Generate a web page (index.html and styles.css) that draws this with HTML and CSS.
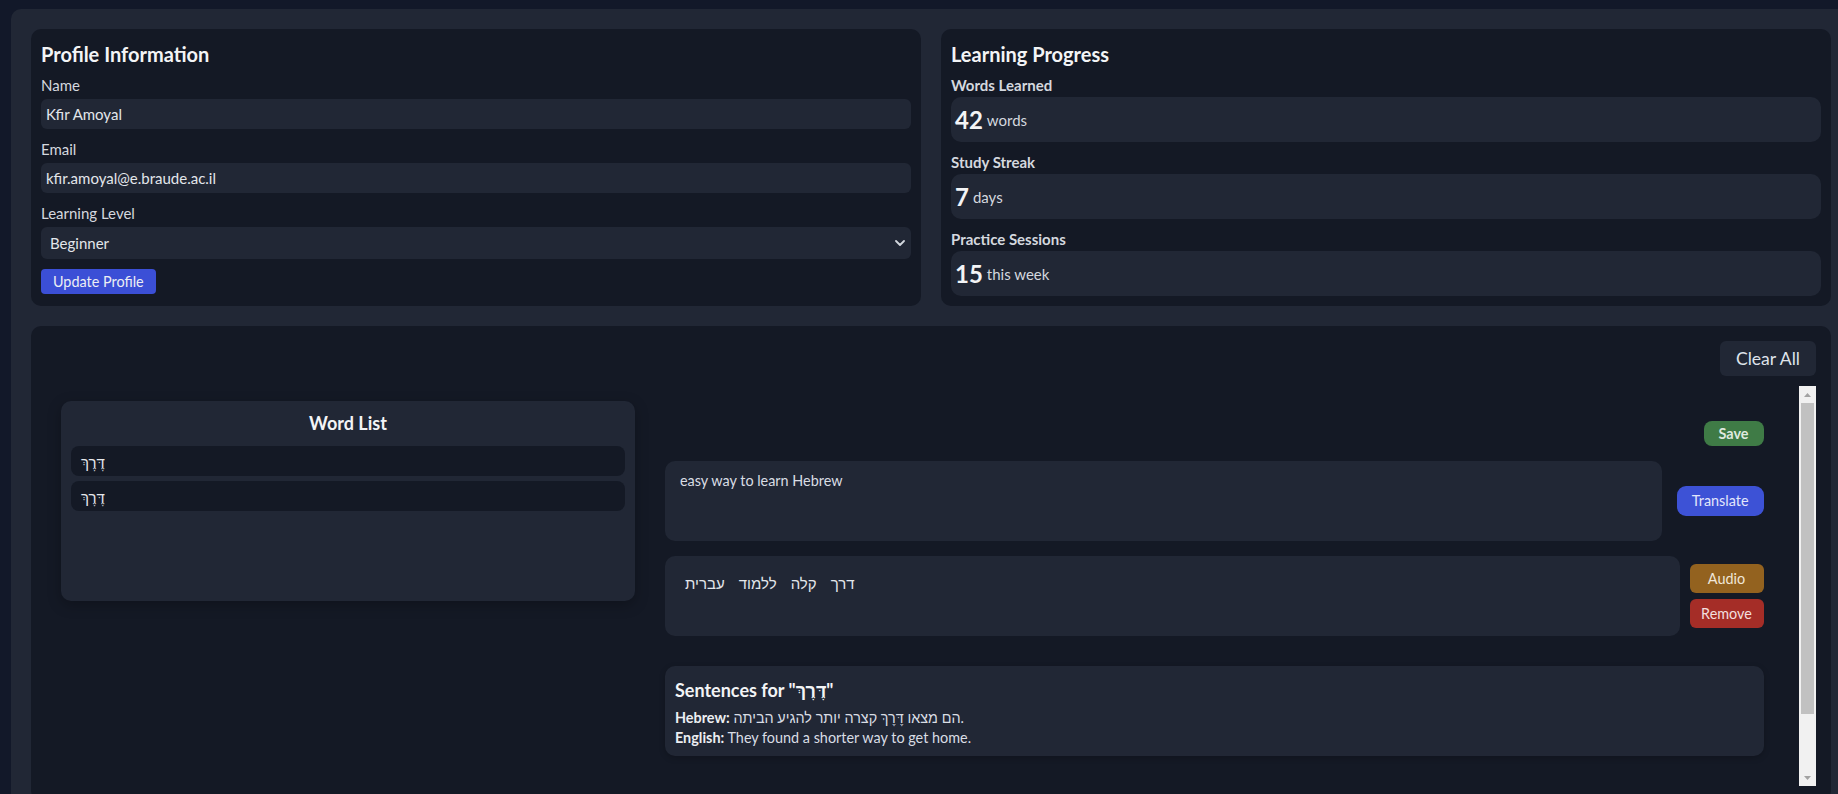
FILE: index.html
```html
<!DOCTYPE html>
<html lang="en">
<head>
<meta charset="utf-8">
<title>Hebrew Learning – Profile</title>
<link rel="stylesheet" href="styles.css">
</head>
<body>
<div class="app">
  <div class="top-grid">
    <section class="card">
      <h2 class="card-title">Profile Information</h2>
      <div class="field">
        <label class="field-label" for="name">Name</label>
        <input class="text-input" id="name" type="text" value="Kfir Amoyal">
      </div>
      <div class="field">
        <label class="field-label" for="email">Email</label>
        <input class="text-input" id="email" type="email" value="kfir.amoyal@e.braude.ac.il">
      </div>
      <div class="field field-last">
        <label class="field-label" for="level">Learning Level</label>
        <div class="select-wrap">
          <select class="select-input" id="level">
            <option>Beginner</option>
            <option>Intermediate</option>
            <option>Advanced</option>
          </select>
          <svg class="select-chevron" width="10" height="6" viewBox="0 0 10 6" aria-hidden="true"><path d="M1 1l4 4 4-4" fill="none" stroke="#d3d7de" stroke-width="1.8" stroke-linecap="round" stroke-linejoin="round"/></svg>
        </div>
      </div>
      <button class="btn btn-primary" type="button">Update Profile</button>
    </section>

    <section class="card">
      <h2 class="card-title">Learning Progress</h2>
      <div class="stat">
        <div class="stat-label">Words Learned</div>
        <div class="stat-box"><span class="stat-value">42</span><span class="stat-unit">words</span></div>
      </div>
      <div class="stat">
        <div class="stat-label">Study Streak</div>
        <div class="stat-box"><span class="stat-value">7</span><span class="stat-unit">days</span></div>
      </div>
      <div class="stat stat-last">
        <div class="stat-label">Practice Sessions</div>
        <div class="stat-box"><span class="stat-value">15</span><span class="stat-unit">this week</span></div>
      </div>
    </section>
  </div>

  <section class="card workspace">
    <div class="workspace-header">
      <button class="btn-clear" type="button">Clear All</button>
    </div>
    <div class="workspace-scroll">
      <div class="scroll-content">
        <div class="workspace-row">
          <aside class="word-list">
            <h3 class="word-list-title">Word List</h3>
            <ul class="word-items">
              <li class="word-item">דֶּרֶךְ</li>
              <li class="word-item">דֶּרֶךְ</li>
            </ul>
          </aside>

          <div class="editor">
            <div class="save-row">
              <button class="btn btn-save" type="button">Save</button>
            </div>
            <div class="editor-row">
              <textarea class="source-text">easy way to learn Hebrew</textarea>
              <button class="btn btn-translate" type="button">Translate</button>
            </div>
            <div class="editor-row translation-row">
              <div class="translation">
                <div class="words" dir="rtl">
                  <span class="word">דרך</span>
                  <span class="word">קלה</span>
                  <span class="word">ללמוד</span>
                  <span class="word">עברית</span>
                </div>
              </div>
              <div class="action-col">
                <button class="btn btn-audio" type="button">Audio</button>
                <button class="btn btn-remove" type="button">Remove</button>
              </div>
            </div>
            <div class="sentences">
              <h3 class="sentences-title">Sentences for "דֶּרֶךְ"</h3>
              <p class="sentence-line"><b>Hebrew:</b> הם מצאו דֶּרֶךְ קצרה יותר להגיע הביתה.</p>
              <p class="sentence-line"><b>English:</b> They found a shorter way to get home.</p>
            </div>
          </div>
        </div>
      </div>
      <div class="scrollbar" aria-hidden="true">
        <div class="scrollbar-btn">
          <svg width="7" height="4" viewBox="0 0 7 4"><path d="M0 4L3.5 0 7 4z" fill="#a3a3a3"/></svg>
        </div>
        <div class="scrollbar-track"><div class="scrollbar-thumb"></div></div>
        <div class="scrollbar-btn">
          <svg width="7" height="4" viewBox="0 0 7 4"><path d="M0 0h7L3.5 4z" fill="#a3a3a3"/></svg>
        </div>
      </div>
    </div>
  </section>
</div>
</body>
</html>
```

FILE: styles.css
```css
* {
  box-sizing: border-box;
}

html,
body {
  margin: 0;
  overflow: hidden;
}

body {
  background: #121829;
  color: #e5e7eb;
  font-family: Lato, "Liberation Sans", "DejaVu Sans", sans-serif;
}

.app {
  width: 1840px;
  margin: 9px 0 0 11px;
  padding: 20px;
  background: #212735;
  border-radius: 10px;
}

.top-grid {
  display: grid;
  grid-template-columns: 1fr 1fr;
  gap: 20px;
  margin-bottom: 20px;
}

.card {
  background: #141925;
  border-radius: 10px;
  padding: 10px;
}

.card-title {
  margin: 0 0 4px;
  padding-top: 1px;
  font-size: 20px;
  line-height: 29px;
  font-weight: 700;
  color: #f3f4f6;
}

/* profile form */
.field {
  margin-bottom: 8px;
}

.field-last {
  margin-bottom: 10px;
}

.field-label {
  display: block;
  margin-bottom: 3px;
  padding-top: 1px;
  font-size: 15px;
  line-height: 22px;
  color: #d4d8df;
}

.text-input {
  display: block;
  width: 100%;
  height: 30px;
  padding: 0 5px;
  border: 0;
  border-radius: 6px;
  background: #212735;
  color: #e3e6eb;
  font: inherit;
  font-size: 15px;
  outline: none;
}

.select-wrap {
  position: relative;
}

.select-input {
  display: block;
  width: 100%;
  height: 32px;
  padding: 0 9px;
  border: 0;
  border-radius: 6px;
  background: #212735;
  color: #e3e6eb;
  font: inherit;
  font-size: 15px;
  appearance: none;
  -webkit-appearance: none;
  outline: none;
}

.select-chevron {
  position: absolute;
  right: 6px;
  top: 13px;
  pointer-events: none;
}

.btn {
  font: inherit;
  font-size: 14.4px;
  line-height: 19px;
  border: 0;
  color: #eceef4;
  cursor: pointer;
}

.btn-primary {
  padding: 3px 12px;
  background: #3b4fd6;
  border-radius: 4px;
}

/* progress */
.stat {
  margin-bottom: 8px;
}

.stat-last {
  margin-bottom: 0;
}

.stat-label {
  margin-bottom: 1px;
  padding-top: 1px;
  font-size: 15px;
  line-height: 22px;
  font-weight: 700;
  color: #d4d8df;
}

.stat-box {
  display: flex;
  align-items: center;
  gap: 4px;
  height: 45px;
  padding: 0 4px;
  border-radius: 10px;
  background: #212735;
}

.stat-value {
  font-size: 24px;
  line-height: 1;
  font-weight: 700;
  color: #f3f4f6;
}

.stat-unit {
  font-size: 15px;
  color: #d4d8df;
}

/* workspace */
.workspace {
  padding: 15px;
}

.workspace-header {
  display: flex;
  justify-content: flex-end;
  margin-bottom: 10px;
}

.btn-clear {
  font: inherit;
  font-size: 17.6px;
  line-height: 23px;
  padding: 6px 16px;
  border: 0;
  border-radius: 6px;
  background: #212735;
  color: #dfe3ea;
  cursor: pointer;
}

.workspace-scroll {
  display: flex;
  height: 400px;
}

.scroll-content {
  flex: 1;
  min-width: 0;
  overflow: hidden;
  padding: 15px;
}

.scrollbar {
  flex: none;
  width: 17px;
  display: flex;
  flex-direction: column;
  background: #f1f1f1;
}

.scrollbar-btn {
  flex: none;
  height: 17px;
  display: flex;
  align-items: center;
  justify-content: center;
}

.scrollbar-track {
  flex: 1;
  padding: 0 2px;
}

.scrollbar-thumb {
  height: 311px;
  background: #c1c1c1;
}

.workspace-row {
  display: flex;
  align-items: flex-start;
  gap: 30px;
}

.word-list {
  flex: none;
  width: 574px;
  height: 200px;
  padding: 10px;
  border-radius: 10px;
  background: #212735;
  box-shadow: 0 4px 14px rgba(0, 0, 0, 0.25);
}

.word-list-title {
  margin: 0 0 10px;
  text-align: center;
  font-size: 18px;
  line-height: 25px;
  font-weight: 700;
  color: #f3f4f6;
}

.word-items {
  list-style: none;
  margin: 0;
  padding: 0;
  display: flex;
  flex-direction: column;
  gap: 5px;
}

.word-item {
  height: 30px;
  padding: 2px 10px 0;
  line-height: 28px;
  border-radius: 8px;
  background: #141925;
  font-size: 15px;
  color: #e5e7eb;
}

.editor {
  flex: 1;
  padding: 20px 20.5px 20px 0;
}

.save-row {
  display: flex;
  justify-content: flex-end;
  margin-bottom: 15px;
}

.btn-save {
  padding: 3px 15px;
  background: #3f7b46;
  border-radius: 8px;
  font-weight: 700;
  color: #dfe9df;
}

.editor-row {
  display: flex;
  align-items: center;
  gap: 15px;
  margin-bottom: 15px;
}

.source-text {
  flex: 1;
  height: 80px;
  padding: 10px 15px;
  border: 0;
  border-radius: 10px;
  background: #212735;
  color: #d9dde4;
  font: inherit;
  font-size: 14.4px;
  line-height: 20px;
  resize: none;
  outline: none;
}

.btn-translate {
  padding: 5px 15px;
  line-height: 20px;
  background: #3d52d6;
  border-radius: 9px;
  color: #e2e6fb;
}

.translation-row {
  gap: 10px;
  margin-bottom: 30px;
}

.translation {
  flex: 1;
  height: 80px;
  padding: 15px 16px 13px;
  border-radius: 10px;
  background: #212735;
}

.words {
  display: inline-flex;
  gap: 6px;
}

.word {
  padding: 2px 4px;
  font-size: 15px;
  line-height: 20px;
  color: #e3e6eb;
}

.action-col {
  flex: none;
  width: 74px;
  display: flex;
  flex-direction: column;
  gap: 6px;
}

.btn-audio,
.btn-remove {
  padding: 5px 10px;
  border-radius: 6px;
}

.btn-audio {
  background: #93621f;
  color: #f0e6d8;
}

.btn-remove {
  background: #a52d27;
  color: #f3dede;
}

.sentences {
  padding: 11px 10px 8px;
  border-radius: 10px;
  background: #212735;
  box-shadow: 0 2px 6px rgba(0, 0, 0, 0.2);
}

.sentences-title {
  margin: 0 0 4px;
  font-size: 18px;
  line-height: 27px;
  font-weight: 700;
  color: #f3f4f6;
}

.sentence-line {
  margin: 0;
  font-size: 14.4px;
  line-height: 20px;
  color: #d9dde4;
}

.sentence-line b {
  color: #eceef2;
}
```
